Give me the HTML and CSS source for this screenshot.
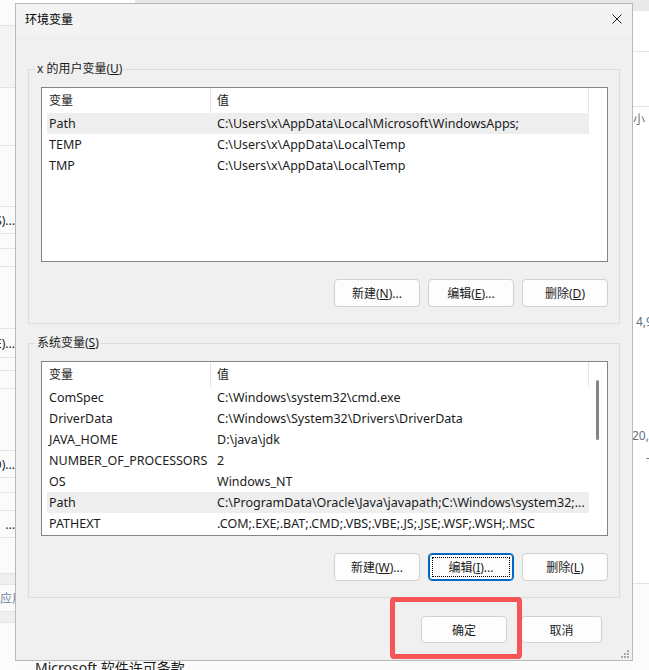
FILE: index.html
```html
<!DOCTYPE html>
<html lang="zh-CN">
<head>
    <meta charset="UTF-8">
    <meta name="viewport" content="width=device-width, initial-scale=1.0">
    <title>环境变量</title>
    <link rel="stylesheet" href="styles.css">
</head>
<body>
    <!-- fenêtres derrière la boîte de dialogue -->
    <div class="desktop">
        <div class="edge edge-left">
            <div class="row row-top"></div>
            <div class="row row-head"></div>
            <div class="row pane pane-s"></div>
            <div class="row pane"></div>
            <div class="row act">(S)...</div>
            <div class="row sp15"></div>
            <div class="row sp18"></div>
            <div class="row pane pane-l"></div>
            <div class="row act act-l">(E)...</div>
            <div class="row sp13"></div>
            <div class="row sp18"></div>
            <div class="row pane pane-l"></div>
            <div class="row act">(D)...</div>
            <div class="row sp15"></div>
            <div class="row sp18"></div>
            <div class="row act">...</div>
            <div class="row gap"></div>
            <div class="row band"></div>
            <div class="row act"><span class="link">应用</span></div>
            <div class="row band"></div>
            <div class="row rest"></div>
        </div>

        <div class="middle">
            <div class="middle-top"></div>
            <div class="license">Microsoft 软件许可条款</div>
        </div>

        <div class="edge edge-right">
            <div class="r-top"></div>
            <div class="r-row r-row-a"></div>
            <div class="r-row r-row-b"></div>
            <div class="r-row r-body">
                <div class="r-text size">大小</div>
                <div class="r-text n1">4,979 KB</div>
                <div class="r-text n2">20,736 KB</div>
                <div class="r-text n3">-</div>
            </div>
            <div class="r-rest"></div>
        </div>
    </div>

    <div class="dialog">
        <div class="titlebar">
            <span class="title">环境变量</span>
            <button class="close" aria-label="关闭">
                <svg width="10" height="10" viewBox="0 0 10 10">
                    <path d="M0.5 0.5 L9.5 9.5 M9.5 0.5 L0.5 9.5" stroke="#1f1f1f" stroke-width="1" fill="none"/>
                </svg>
            </button>
        </div>

        <div class="dialog-body">
            <fieldset class="group">
                <legend>x 的用户变量(<u>U</u>)</legend>
                <div class="group-inner">
                    <div class="varlist">
                        <div class="varlist-main">
                            <div class="varlist-head">
                                <span class="hcell">变量</span>
                                <span class="hcell">值</span>
                            </div>
                            <div class="var-row selected"><span>Path</span><span>C:\Users\x\AppData\Local\Microsoft\WindowsApps;</span></div>
                            <div class="var-row"><span>TEMP</span><span>C:\Users\x\AppData\Local\Temp</span></div>
                            <div class="var-row"><span>TMP</span><span>C:\Users\x\AppData\Local\Temp</span></div>
                        </div>
                        <div class="varlist-scroll"></div>
                    </div>
                    <div class="btn-row">
                        <button class="btn">新建(<u>N</u>)...</button>
                        <button class="btn">编辑(<u>E</u>)...</button>
                        <button class="btn">删除(<u>D</u>)</button>
                    </div>
                </div>
            </fieldset>

            <fieldset class="group group-system">
                <legend>系统变量(<u>S</u>)</legend>
                <div class="group-inner">
                    <div class="varlist">
                        <div class="varlist-main">
                            <div class="varlist-head">
                                <span class="hcell">变量</span>
                                <span class="hcell">值</span>
                            </div>
                            <div class="var-row"><span>ComSpec</span><span>C:\Windows\system32\cmd.exe</span></div>
                            <div class="var-row"><span>DriverData</span><span>C:\Windows\System32\Drivers\DriverData</span></div>
                            <div class="var-row"><span>JAVA_HOME</span><span>D:\java\jdk</span></div>
                            <div class="var-row"><span>NUMBER_OF_PROCESSORS</span><span>2</span></div>
                            <div class="var-row"><span>OS</span><span>Windows_NT</span></div>
                            <div class="var-row selected"><span>Path</span><span>C:\ProgramData\Oracle\Java\javapath;C:\Windows\system32;...</span></div>
                            <div class="var-row"><span>PATHEXT</span><span>.COM;.EXE;.BAT;.CMD;.VBS;.VBE;.JS;.JSE;.WSF;.WSH;.MSC</span></div>
                        </div>
                        <div class="varlist-scroll">
                            <div class="thumb"></div>
                        </div>
                    </div>
                    <div class="btn-row">
                        <button class="btn">新建(<u>W</u>)...</button>
                        <button class="btn focused">编辑(<u>I</u>)...</button>
                        <button class="btn">删除(<u>L</u>)</button>
                    </div>
                </div>
            </fieldset>

            <div class="dialog-actions">
                <button class="btn btn-ok">确定</button>
                <button class="btn btn-cancel">取消</button>
            </div>
        </div>

        <svg class="grip" width="8" height="8" viewBox="0 0 8 8">
            <rect x="6" y="0" width="2" height="2" fill="#a9a9a9"/>
            <rect x="3" y="3" width="2" height="2" fill="#a9a9a9"/>
            <rect x="6" y="3" width="2" height="2" fill="#a9a9a9"/>
            <rect x="0" y="6" width="2" height="2" fill="#a9a9a9"/>
            <rect x="3" y="6" width="2" height="2" fill="#a9a9a9"/>
            <rect x="6" y="6" width="2" height="2" fill="#a9a9a9"/>
        </svg>
    </div>

    <!-- cadre rouge autour du bouton OK -->
    <div class="mark"></div>
</body>
</html>
```

FILE: styles.css
```css
* {
    box-sizing: border-box;
}

body {
    margin: 0;
    width: 649px;
    height: 670px;
    overflow: hidden;
    position: relative;
    background: #fafafa;
    font-family: "Noto Sans", "Noto Sans CJK SC", sans-serif;
    font-size: 12px;
    color: #1b1b1b;
}

/* ---------- fond ---------- */
.desktop {
    display: grid;
    grid-template-columns: 15px 1fr 17px;
    height: 670px;
}
.edge {
    display: flex;
    flex-direction: column;
    overflow: hidden;
}
.edge-left .row {
    display: flex;
    align-items: center;
    justify-content: flex-end;
    white-space: nowrap;
    border-bottom: 1px solid #e3e3e3;
    background: #fbfbfb;
    flex-shrink: 0;
}
.row-top { height: 26px; }
.row-head { height: 62px; background: #f4f4f4 !important; }
.pane { height: 61px; }
.pane-s { height: 58px; }
.pane-l { height: 62px; }
.act { height: 27px; }
.act-l { height: 29px; }
.sp13 { height: 13px; }
.sp15 { height: 15px; }
.sp18 { height: 18px; }
.gap { height: 36px; }
.band { height: 11px; background: #efefef !important; }
.edge-left .rest { flex: 1; border-bottom: none; }
.link {
    color: #6f86a6;
    margin-right: -9px;
}

.middle {
    display: flex;
    flex-direction: column;
    justify-content: space-between;
}
.middle-top {
    height: 4px;
    background: linear-gradient(to right, #fff 120px, #e6e6e6 120px);
}
.license {
    margin: 0 0 -8px 20px;
    font-size: 14px;
    line-height: 20px;
    color: #1b1b1b;
}

.edge-right {
    background: #fff;
}
.r-top {
    height: 11px;
    background: #e9e9e9;
}
.r-row {
    border-bottom: 1px solid #e3e3e3;
    flex-shrink: 0;
}
.r-row-a { height: 41px; }
.r-row-b { height: 55px; }
.r-body {
    height: 477px;
    white-space: nowrap;
}
.r-text {
    line-height: 20px;
    height: 20px;
    color: #66707c;
}
.size { margin: 3px 0 0 -11px; }
.n1 { margin: 182px 0 0 4px; }
.n2 { margin: 94px 0 0 0; }
.n3 { margin: 2px 0 0 14px; }
.r-rest {
    flex: 1;
    background: #fbfbfb;
}

/* ---------- boîte de dialogue ---------- */
.dialog {
    position: absolute;
    left: 15px;
    top: 3px;
    width: 618px;
    height: 658px;
    border: 1px solid #b9b9b9;
    background: #f0f0f0;
}
.titlebar {
    height: 30px;
    display: flex;
    align-items: center;
    justify-content: space-between;
    background: #f3f3f3;
}
.title {
    padding-left: 9px;
    font-size: 12px;
    color: #000;
}
.close {
    width: 30px;
    height: 30px;
    border: none;
    background: none;
    padding: 0;
    display: flex;
    align-items: center;
    justify-content: center;
}

.dialog-body {
    padding: 0 12px;
}

.group {
    margin: 27px 0 0;
    padding: 0;
    border: 1px solid #dcdcdc;
    min-width: 0;
}
.group-system {
    margin-top: 11px;
}
.group legend {
    margin-left: 6px;
    padding: 0 2px;
    line-height: 16px;
    height: 16px;
    color: #1b1b1b;
}
.group-inner {
    padding: 10px 11px 16px 12px;
}

.varlist {
    height: 175px;
    border: 1px solid #848484;
    background: #fff;
    display: flex;
    overflow: hidden;
}
.varlist-main {
    flex: 1;
}
.varlist-scroll {
    width: 18px;
    padding: 18px 0 0 7px;
}
.thumb {
    width: 3px;
    height: 60px;
    border-radius: 2px;
    background: #858585;
}

.varlist-head {
    display: grid;
    grid-template-columns: 169px 1fr;
    height: 25px;
}
.hcell {
    padding-left: 6px;
    line-height: 25px;
    border-right: 1px solid #e5e5e5;
    color: #1b1b1b;
}
.hcell:first-child {
    padding-left: 7px;
}

.var-row {
    display: grid;
    grid-template-columns: 164px 1fr;
    margin-left: 5px;
    height: 21px;
    line-height: 21px;
    font-size: 12.5px;
    white-space: nowrap;
}
.var-row span {
    overflow: hidden;
}
.var-row span:first-child {
    padding-left: 2px;
}
.var-row span:last-child {
    padding-left: 6px;
}
.var-row.selected {
    background: #eeeeee;
}

.btn-row {
    display: flex;
    justify-content: flex-end;
    gap: 8px;
    margin-top: 17px;
}
.btn {
    position: relative;
    width: 86px;
    height: 28px;
    padding: 0;
    border: 1px solid #d0d0d0;
    border-radius: 4px;
    background: #fdfdfd;
    font-family: inherit;
    font-size: 12px;
    color: #1b1b1b;
    display: flex;
    align-items: center;
    justify-content: center;
}
.btn.focused {
    border-color: #0067c0;
    box-shadow: inset 0 0 0 1px #0067c0;
}
.btn.focused::after {
    content: "";
    position: absolute;
    inset: 3px;
    border: 1px dotted #000;
}

.dialog-actions {
    display: flex;
    justify-content: flex-end;
    gap: 14px;
    margin-top: 18px;
    padding-right: 18px;
}
.btn-ok,
.btn-cancel {
    height: 27px;
}
.btn-cancel {
    width: 81px;
}

.grip {
    position: absolute;
    right: 3px;
    bottom: 2px;
}

.mark {
    position: absolute;
    left: 390px;
    top: 597px;
    width: 132px;
    height: 62px;
    border: 5px solid #f65555;
    border-radius: 4px;
}
```
